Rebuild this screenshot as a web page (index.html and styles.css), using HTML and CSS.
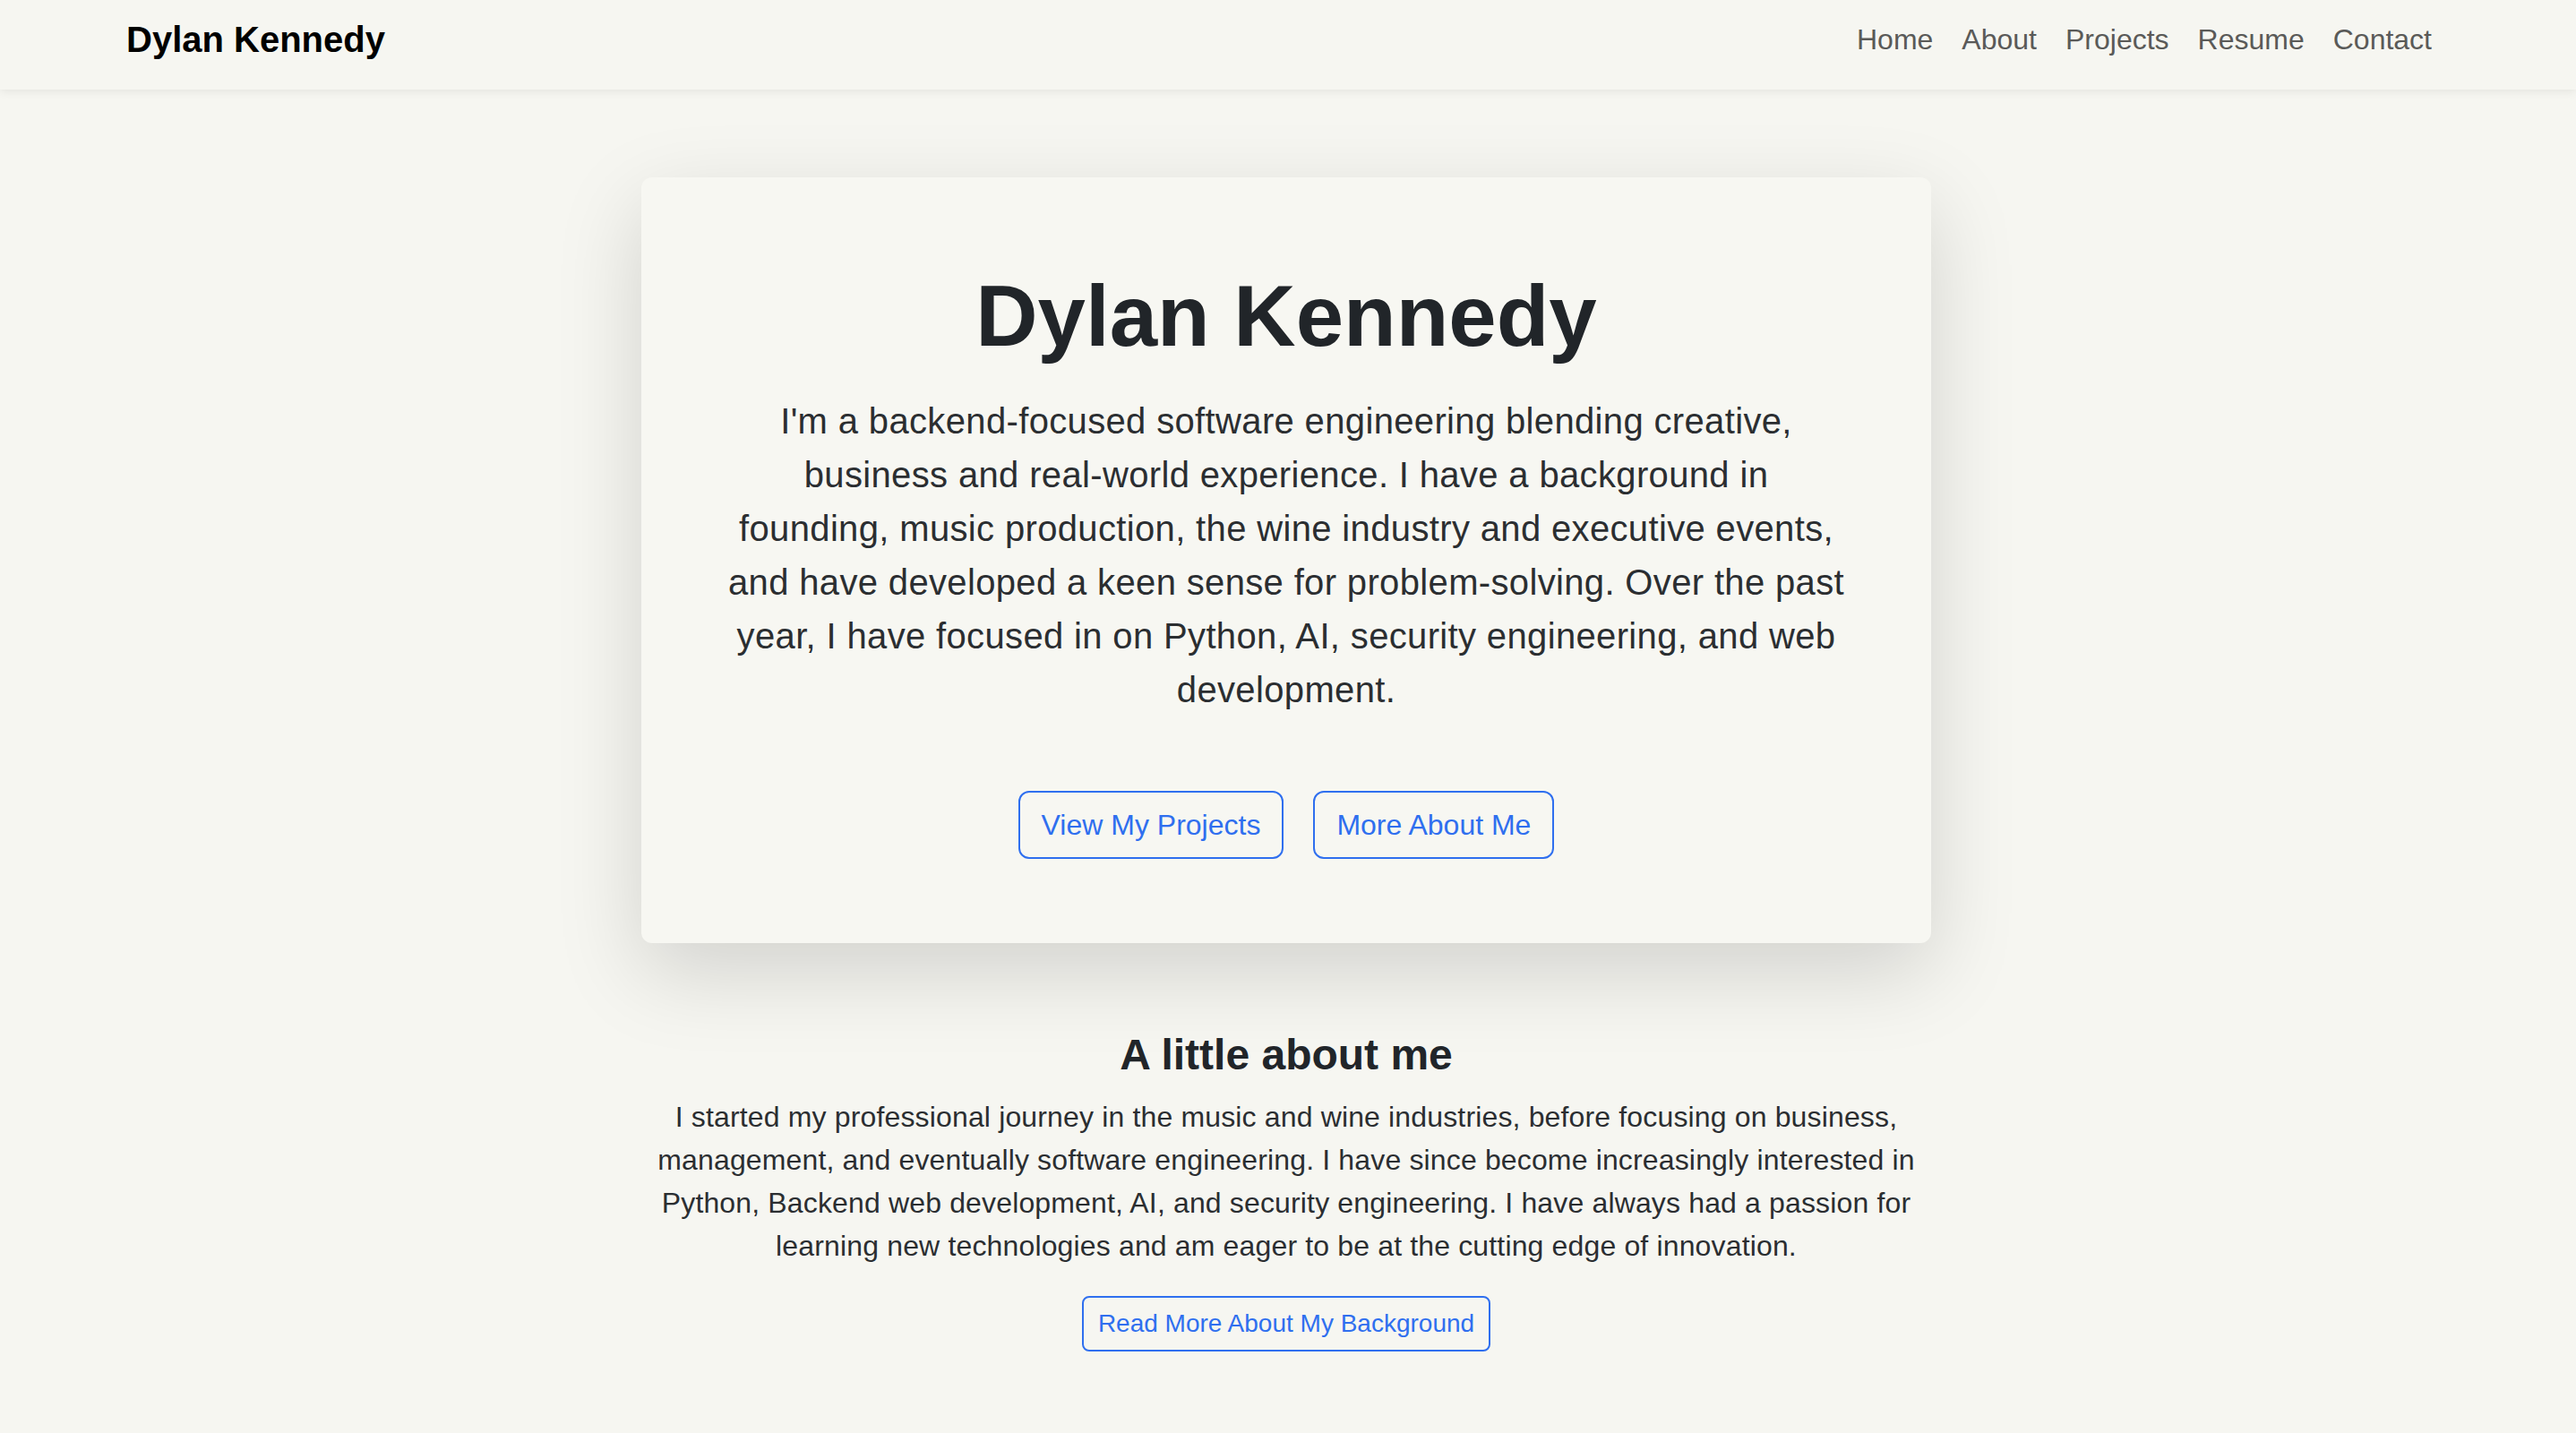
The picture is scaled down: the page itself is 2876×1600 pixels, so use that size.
FILE: index.html
```html
<!DOCTYPE html>
<html lang="en">
<head>
<meta charset="utf-8">
<title>Dylan Kennedy</title>
<link rel="stylesheet" href="styles.css">
</head>
<body>
<header class="navbar">
  <a class="brand" href="#">Dylan Kennedy</a>
  <nav class="nav-links">
    <a class="nav-link" href="#">Home</a>
    <a class="nav-link" href="#">About</a>
    <a class="nav-link" href="#">Projects</a>
    <a class="nav-link" href="#">Resume</a>
    <a class="nav-link" href="#">Contact</a>
  </nav>
</header>
<main class="main">
  <section class="hero-card">
    <h1 class="hero-title">Dylan Kennedy</h1>
    <p class="lead">I'm a backend-focused software engineering blending creative, business and real-world experience. I have a background in founding, music production, the wine industry and executive events, and have developed a keen sense for problem-solving. Over the past year, I have focused in on Python, AI, security engineering, and web development.</p>
    <div class="hero-actions">
      <a class="btn" href="#">View My Projects</a>
      <a class="btn" href="#">More About Me</a>
    </div>
  </section>
  <section class="about">
    <h2 class="about-title">A little about me</h2>
    <p class="about-text">I started my professional journey in the music and wine industries, before focusing on business, management, and eventually software engineering. I have since become increasingly interested in Python, Backend web development, AI, and security engineering. I have always had a passion for learning new technologies and am eager to be at the cutting edge of innovation.</p>
    <a class="btn btn-sm" href="#">Read More About My Background</a>
  </section>
</main>
</body>
</html>
```
FILE: styles.css
```css
html, body {
  margin: 0;
  padding: 0;
}

body {
  background: #f6f6f1;
  font-family: "Liberation Sans", Arial, Helvetica, sans-serif;
  color: #212529;
  min-height: 1600px;
}

.navbar {
  position: relative;
  z-index: 2;
  display: flex;
  justify-content: space-between;
  align-items: center;
  height: 100px;
  box-sizing: border-box;
  padding: 14px 145px 26px 141px;
  background: #f6f6f1;
  box-shadow: 0 2px 10px rgba(0, 0, 0, 0.08);
}

.brand {
  font-size: 40px;
  line-height: 60px;
  font-weight: 700;
  color: #000;
  text-decoration: none;
}

.nav-links {
  display: flex;
}

.nav-link {
  padding: 0 16px;
  font-size: 32px;
  line-height: 48px;
  color: #5a5a58;
  text-decoration: none;
}

.main {
  padding: 98px 4px 0 0;
}

.hero-card {
  width: 1440px;
  box-sizing: border-box;
  margin: 0 auto;
  padding: 97px 96px 94px;
  border-radius: 12px;
  background: #f7f7f2;
  box-shadow: 0 32px 96px rgba(0, 0, 0, 0.15);
  text-align: center;
}

.hero-title {
  margin: 0 0 30px;
  font-size: 96px;
  line-height: 1.2;
  font-weight: 700;
  color: #212529;
}

.lead {
  margin: 0 0 83px;
  font-size: 40px;
  line-height: 60px;
  letter-spacing: 0.35px;
  color: #2b2e31;
}

.hero-actions {
  display: flex;
  justify-content: center;
  gap: 33px;
}

.btn {
  display: inline-block;
  padding: 12px 24px;
  font-size: 32px;
  line-height: 48px;
  border: 2px solid #2f6fef;
  border-radius: 12px;
  color: #2f6fef;
  text-decoration: none;
}

.btn-sm {
  padding: 8px 16px;
  font-size: 28px;
  line-height: 42px;
  border-radius: 8px;
}

.about {
  width: 1440px;
  margin: 96px auto 0;
  text-align: center;
}

.about-title {
  margin: 0 0 16px;
  font-size: 48px;
  line-height: 1.2;
  font-weight: 700;
  color: #212529;
}

.about-text {
  margin: 0 0 32px;
  font-size: 32px;
  line-height: 48px;
  letter-spacing: 0.15px;
  color: #2b2e31;
}
```
